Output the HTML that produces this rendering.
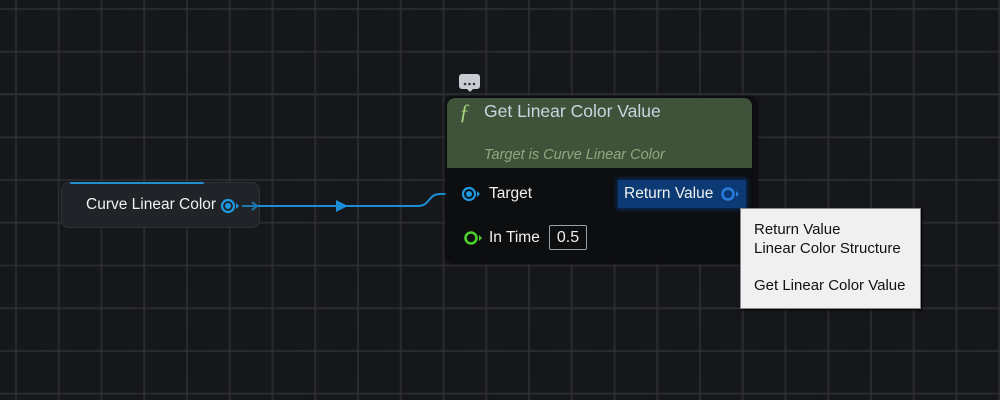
<!DOCTYPE html>
<html><head><meta charset="utf-8"><style>
body{margin:0;width:1000px;height:400px;overflow:hidden;background:#16171b;font-family:"Liberation Sans",sans-serif;position:relative}
.grid{position:absolute;inset:0;
background-image:
linear-gradient(to right, rgba(52,54,60,.6) 2px, transparent 2px),
linear-gradient(to bottom, rgba(52,54,60,.6) 2px, transparent 2px);
background-size:42.75px 42.75px;background-position:15px 8px}
.abs{position:absolute}
</style></head><body>
<div class="grid"></div>
<div class="abs" style="left:0;top:93px;width:1000px;height:2px;background:#2a2c31"></div>

<!-- left node -->
<div class="abs" style="left:61px;top:182px;width:199px;height:46px;background:#202328;border:1px solid #2e3238;border-radius:8px;box-sizing:border-box"></div>
<div class="abs" style="left:70px;top:182px;width:134px;height:2px;background:#1f8fd0;border-radius:2px"></div>
<div class="abs" style="left:86px;top:196px;color:#f0f0f0;font-size:15.5px">Curve Linear Color</div>

<svg class="abs" style="left:0;top:0" width="1000" height="400">
<circle cx="228" cy="206" r="6" fill="none" stroke="#1e9ae0" stroke-width="2.2"/>
<circle cx="228" cy="206" r="3" fill="#1e9ae0"/>
<path d="M236 203 l3 3 -3 3z" fill="#1e9ae0"/>
<path d="M242 206 H256 M252 202 l5 4 -5 4" stroke="#1e7ab0" stroke-width="2" fill="none"/>
<path d="M258 206 H418 C430 206 428 194 440 194 H455" stroke="#1a8fd4" stroke-width="2" fill="none"/>
<path d="M336 200 L348 206 L336 212z" fill="#1a8fd4"/>
<path d="M452 190 l5 4 -5 4" stroke="#1e7ab0" stroke-width="2" fill="none"/>
</svg>

<!-- comment bubble -->
<div class="abs" style="left:459px;top:74px;width:21px;height:15px;background:#c8cdd3;border-radius:3px"></div>
<svg class="abs" style="left:459px;top:74px" width="21" height="18"><circle cx="6" cy="10" r="1.3" fill="#333"/><circle cx="10.5" cy="10" r="1.3" fill="#333"/><circle cx="15" cy="10" r="1.3" fill="#333"/><path d="M8 15 l3 3 3-3z" fill="#c8cdd3"/></svg>

<!-- main node -->
<div class="abs" style="left:446px;top:97px;width:311px;height:166px;background:#0d0e10;border-radius:9px;box-shadow:0 0 3px #000"></div>
<div class="abs" style="left:447px;top:98px;width:305px;height:70px;background:#3e533a;border-radius:8px 8px 0 0"></div>
<div class="abs" style="left:459px;top:99px;color:#a5d680;font-size:22px;font-style:italic;font-family:'Liberation Serif',serif">ƒ</div>
<div class="abs" style="left:484px;top:101px;color:#c9d6e0;font-size:17.5px">Get Linear Color Value</div>
<div class="abs" style="left:484px;top:147px;color:#93a67e;font-size:14.5px;font-style:italic">Target is Curve Linear Color</div>

<div class="abs" style="left:618px;top:180px;width:128px;height:28px;background:#0c3a74;box-shadow:0 0 4px 2px #0a2850"></div>
<svg class="abs" style="left:0;top:0" width="1000" height="400">
<circle cx="469" cy="194" r="6" fill="none" stroke="#1e9ae0" stroke-width="2.2"/>
<circle cx="469" cy="194" r="3" fill="#1e9ae0"/>
<path d="M477 191 l3 3 -3 3z" fill="#1e9ae0"/>
<circle cx="728" cy="194" r="5.5" fill="none" stroke="#2a7ee0" stroke-width="2.4"/>
<path d="M736 191 l3 3 -3 3z" fill="#2a7ee0"/>
<circle cx="471" cy="238" r="5.5" fill="none" stroke="#4bd12a" stroke-width="2.6"/>
<path d="M479 235 l3 3 -3 3z" fill="#4bd12a"/>
</svg>
<div class="abs" style="left:489px;top:185px;color:#f0f0f0;font-size:15.5px">Target</div>
<div class="abs" style="left:624px;top:185px;color:#f0f0f0;font-size:15.5px">Return Value</div>
<div class="abs" style="left:489px;top:229px;color:#f0f0f0;font-size:15.5px">In Time</div>
<div class="abs" style="left:549px;top:225px;width:38px;height:25px;border:1px solid #9aa0a6;border-radius:2px;box-sizing:border-box;color:#f0f0f0;font-size:16px;text-align:center;line-height:23px">0.5</div>

<!-- tooltip -->
<div class="abs" style="left:740px;top:208px;width:181px;height:101px;background:#f0f0f0;border:1px solid #888;box-sizing:border-box;box-shadow:1px 1px 2px #000"></div>
<div class="abs" style="left:754px;top:221px;color:#111;font-size:15px;line-height:18.5px">Return Value<br>Linear Color Structure<br><br>Get Linear Color Value</div>
</body></html>
